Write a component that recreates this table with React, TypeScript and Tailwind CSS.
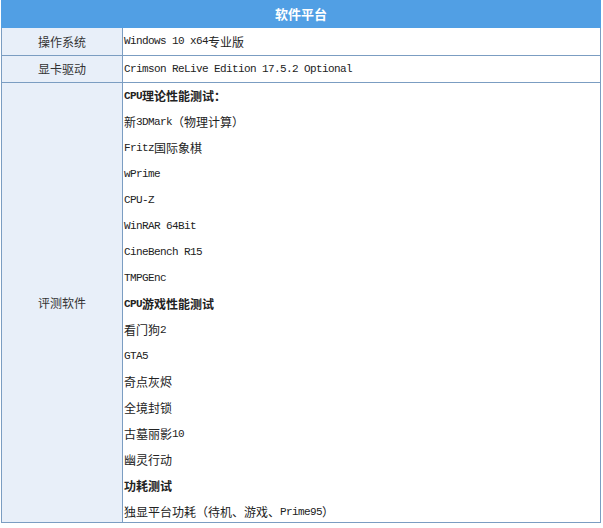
const CJK = /[\u3000-\u9fff\uff00-\uffef]+|[^\u3000-\u9fff\uff00-\uffef]+/g;

// 中文用黑体 12px，英文用等宽窄字，模拟宋体半角
function Mixed({ text, bold }: { text: string; bold?: boolean }) {
  const parts = text.match(CJK) ?? [];
  return (
    <>
      {parts.map((p, i) =>
        /[\u3000-\u9fff\uff00-\uffef]/.test(p) ? (
          <span key={i} className={`text-[12px] font-['Noto_Sans_CJK_SC',sans-serif] ${bold ? 'font-bold' : 'font-normal'}`}>
            {p}
          </span>
        ) : (
          <span key={i} className={`text-[11px] tracking-[-0.6px] font-['Liberation_Mono',monospace] ${bold ? 'font-bold' : 'font-normal'}`}>
            {p}
          </span>
        ),
      )}
    </>
  );
}

const software = [
  { t: 'CPU理论性能测试：', b: true },
  { t: '新3DMark（物理计算）' },
  { t: 'Fritz国际象棋' },
  { t: 'wPrime' },
  { t: 'CPU-Z' },
  { t: 'WinRAR 64Bit' },
  { t: 'CineBench R15' },
  { t: 'TMPGEnc' },
  { t: 'CPU游戏性能测试', b: true },
  { t: '看门狗2' },
  { t: 'GTA5' },
  { t: '奇点灰烬' },
  { t: '全境封锁' },
  { t: '古墓丽影10' },
  { t: '幽灵行动' },
  { t: '功耗测试', b: true },
  { t: '独显平台功耗（待机、游戏、Prime95）' },
];

function Label({ children }: { children: string }) {
  return (
    <div className="w-[121px] shrink-0 bg-[#e8eff9] border-r border-[#7b9dc2] flex items-center justify-center text-[12px] text-[#333] font-['Noto_Sans_CJK_SC',sans-serif]">
      {children}
    </div>
  );
}

export default function App() {
  return (
    <div className="bg-white w-[603px] h-[528px] pl-[1px]">
      <div className="w-[600px] text-[#222]">
        <div className="h-[28px] bg-[#519fe4] flex items-center justify-center text-white text-[13px] font-bold font-['Noto_Sans_CJK_SC',sans-serif]">
          软件平台
        </div>
        <div className="border-l border-r border-b border-[#7b9dc2]">
          <div className="flex h-[27px]">
            <Label>操作系统</Label>
            <div className="flex-1 flex items-center pl-[1px] bg-white">
              <Mixed text="Windows 10 x64专业版" />
            </div>
          </div>
          <div className="flex h-[27px] border-t border-[#7b9dc2]">
            <Label>显卡驱动</Label>
            <div className="flex-1 flex items-center pl-[1px] bg-white">
              <Mixed text="Crimson ReLive Edition 17.5.2 Optional" />
            </div>
          </div>
          <div className="flex border-t border-[#7b9dc2]">
            <Label>评测软件</Label>
            <div className="flex-1 flex flex-col gap-[10px] pt-[5px] pb-[2px] pl-[1px] bg-white">
              {software.map((s) => (
                <div key={s.t} className="h-[16px] leading-[16px] flex items-center">
                  <Mixed text={s.t} bold={s.b} />
                </div>
              ))}
            </div>
          </div>
        </div>
      </div>
    </div>
  );
}
